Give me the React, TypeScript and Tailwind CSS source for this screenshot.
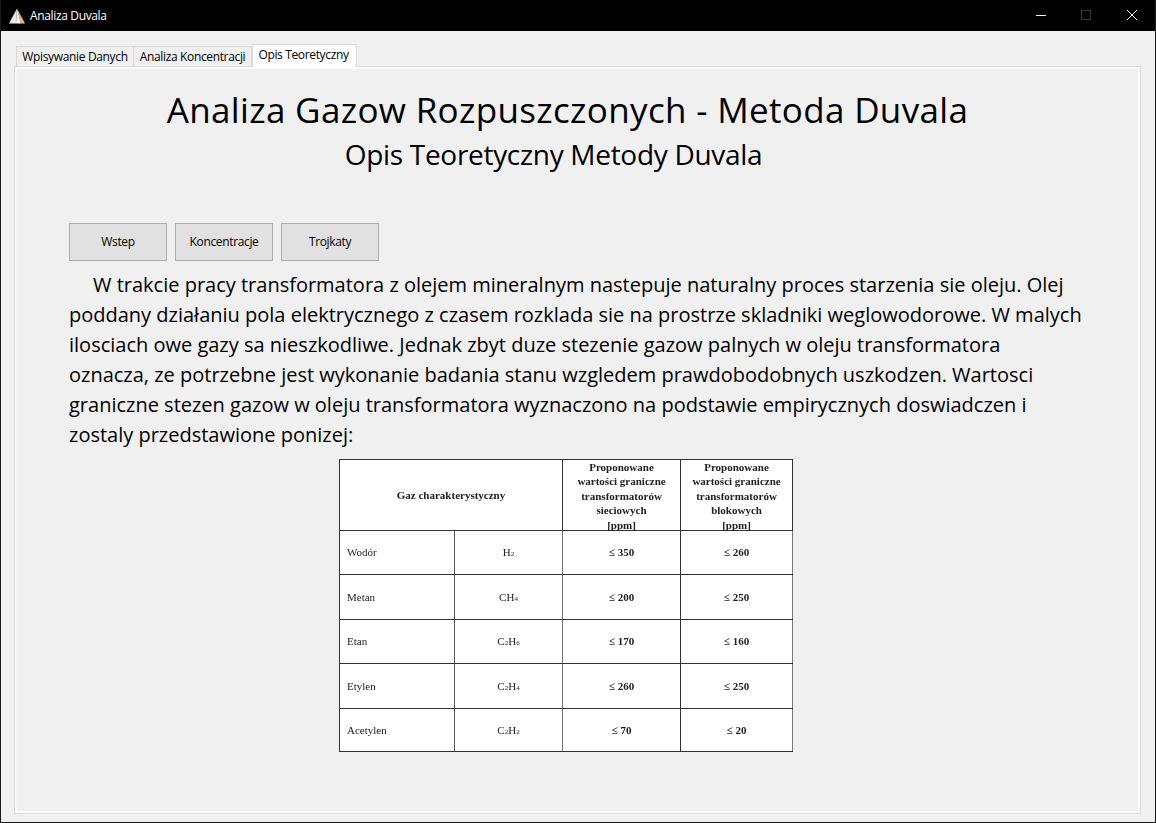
import React from 'react';

const font = "font-['Open_Sans','Noto_Sans',sans-serif]";

const paragraph = [
  'W trakcie pracy transformatora z olejem mineralnym nastepuje naturalny proces starzenia sie oleju. Olej',
  'poddany działaniu pola elektrycznego z czasem rozklada sie na prostrze skladniki weglowodorowe. W malych',
  'ilosciach owe gazy sa nieszkodliwe. Jednak zbyt duze stezenie gazow palnych w oleju transformatora',
  'oznacza, ze potrzebne jest wykonanie badania stanu wzgledem prawdobodobnych uszkodzen. Wartosci',
  'graniczne stezen gazow w oleju transformatora wyznaczono na podstawie empirycznych doswiadczen i',
  'zostaly przedstawione ponizej:',
];

const rows = [
  { name: 'Wodór', formula: ['H', '2'], a: '≤ 350', b: '≤ 260', h: 'h-[44px]', top: '' },
  { name: 'Metan', formula: ['CH', '4'], a: '≤ 200', b: '≤ 250', h: 'h-[45px]', top: '' },
  { name: 'Etan', formula: ['C', '2', 'H', '6'], a: '≤ 170', b: '≤ 160', h: 'h-[44px]', top: '' },
  { name: 'Etylen', formula: ['C', '2', 'H', '4'], a: '≤ 260', b: '≤ 250', h: 'h-[45px]', top: '' },
  { name: 'Acetylen', formula: ['C', '2', 'H', '2'], a: '≤ 70', b: '≤ 20', h: 'h-[43px]', top: 'border-t-[#8a8a8a]' },
];

const Formula = ({ parts }: { parts: string[] }) => (
  <>
    {parts.map((p, i) =>
      i % 2 === 1 ? (
        <span key={i} className="text-[7px]">{p}</span>
      ) : (
        <span key={i}>{p}</span>
      )
    )}
  </>
);

const HeaderCell = ({ lines }: { lines: string[] }) => (
  <th className="border border-[#333] font-bold p-0">
    <div className="h-[70px] -mt-[1px] leading-[14.5px] whitespace-nowrap overflow-visible">
      {lines.map((l) => (
        <div key={l}>{l}</div>
      ))}
    </div>
  </th>
);

const GasTable = () => (
  <div className="mt-[9px] ml-[270px]">
    <table className="w-[453px] table-fixed border-collapse bg-white font-['Liberation_Serif',serif] text-[11px] text-[#222] blur-[0.3px]">
      <colgroup>
        <col className="w-[115px]" />
        <col className="w-[108px]" />
        <col className="w-[118px]" />
        <col className="w-[112px]" />
      </colgroup>
      <thead>
        <tr className="h-[71px]">
          <th colSpan={2} className="border border-[#333] font-bold">Gaz charakterystyczny</th>
          <HeaderCell lines={['Proponowane', 'wartości graniczne', 'transformatorów', 'sieciowych', '[ppm]']} />
          <HeaderCell lines={['Proponowane', 'wartości graniczne', 'transformatorów', 'blokowych', '[ppm]']} />
        </tr>
      </thead>
      <tbody>
        {rows.map((r) => (
          <tr key={r.name} className={r.h}>
            <td className={`border border-[#333] border-r-[#555] pl-[7px] ${r.top}`}>{r.name}</td>
            <td className={`border border-[#333] border-r-[#777] text-center ${r.top}`}><Formula parts={r.formula} /></td>
            <td className={`border border-[#333] text-center font-bold ${r.top}`}>{r.a}</td>
            <td className={`border border-[#333] border-r-[#777] text-center font-bold ${r.top}`}>{r.b}</td>
          </tr>
        ))}
      </tbody>
    </table>
  </div>
);

export default function App() {
  return (
    <div className={`${font} w-[1156px] h-[823px] flex flex-col bg-[#f0f0f0] border border-[#1a1a1a] border-t-0 overflow-hidden`}>
      <div className="h-[31px] shrink-0 bg-black flex items-center text-white text-[12px] pl-[8px]">
        <svg width="18" height="18" viewBox="0 0 18 18" className="mr-[3px]">
          <polygon points="8,1.5 0,16.5 7,16.5" fill="#dce9e4" />
          <polygon points="8,1.5 7,16.5 12,16.5" fill="#ffffff" />
          <polygon points="8,1.5 12,16.5 16,16.5" fill="#f6b27e" />
        </svg>
        <span className="tracking-[-0.35px]">Analiza Duvala</span>
        <div className="ml-auto flex items-center">
          <svg width="119" height="16" viewBox="0 0 119 16">
            <path d="M0 7.5h10" stroke="#fff" fill="none" />
            <rect x="45.5" y="2.5" width="9" height="9" stroke="#3a3a3a" fill="none" />
            <path d="M91 2l10 10M101 2l-10 10" stroke="#fff" fill="none" />
          </svg>
        </div>
      </div>

      <div className="flex-1 flex flex-col pl-[13px] pr-[14px] pt-[13px] pb-[8px]">
        <div className="flex items-end h-[22px] pl-[2px] text-[12px] text-black tracking-[-0.35px]">
          <div className="w-[118px] h-[20px] flex items-center justify-center bg-[#f0f0f0] border border-b-0 border-[#d9d9d9]">Wpisywanie Danych</div>
          <div className="w-[118px] h-[20px] flex items-center justify-center bg-[#f0f0f0] border border-b-0 border-l-0 border-[#d9d9d9]">Analiza Koncentracji</div>
          <div className="w-[105px] h-[23px] pb-[2px] pr-[2px] flex items-center justify-center bg-white border border-b-0 border-[#d9d9d9] -mb-[1px] relative z-10">Opis Teoretyczny</div>
        </div>
        <div className="flex-1 border border-[#d9d9d9] bg-[#f0f0f0]">
          <div className="h-full border-[2px] border-white border-t-[#fafafa] border-l-[#fafafa] pl-[52px]">
            <div className="text-center pr-[72px] pt-[18px] text-black">
              <div className="text-[35px] leading-[46px] tracking-[0.33px] whitespace-nowrap">Analiza Gazow Rozpuszczonych - Metoda Duvala</div>
              <div className="text-[28px] leading-[38px] tracking-[-0.3px] mt-[2px] pr-[28px] whitespace-nowrap">Opis Teoretyczny Metody Duvala</div>
            </div>
            <div className="flex gap-[8px] mt-[50px]">
              {['Wstep', 'Koncentracje', 'Trojkaty'].map((b) => (
                <button key={b} className="w-[98px] h-[38px] bg-[#e1e1e1] border border-[#adadad] text-[12px] tracking-[-0.35px] text-black">
                  {b}
                </button>
              ))}
            </div>
            <div className="mt-[9px] text-[20px] leading-[30px] tracking-[0px] text-black whitespace-nowrap">
              {paragraph.map((line, i) => (
                <div key={i} className={i === 0 ? 'pl-[24px]' : ''}>{line}</div>
              ))}
            </div>
            <GasTable />
          </div>
        </div>
      </div>
    </div>
  );
}
